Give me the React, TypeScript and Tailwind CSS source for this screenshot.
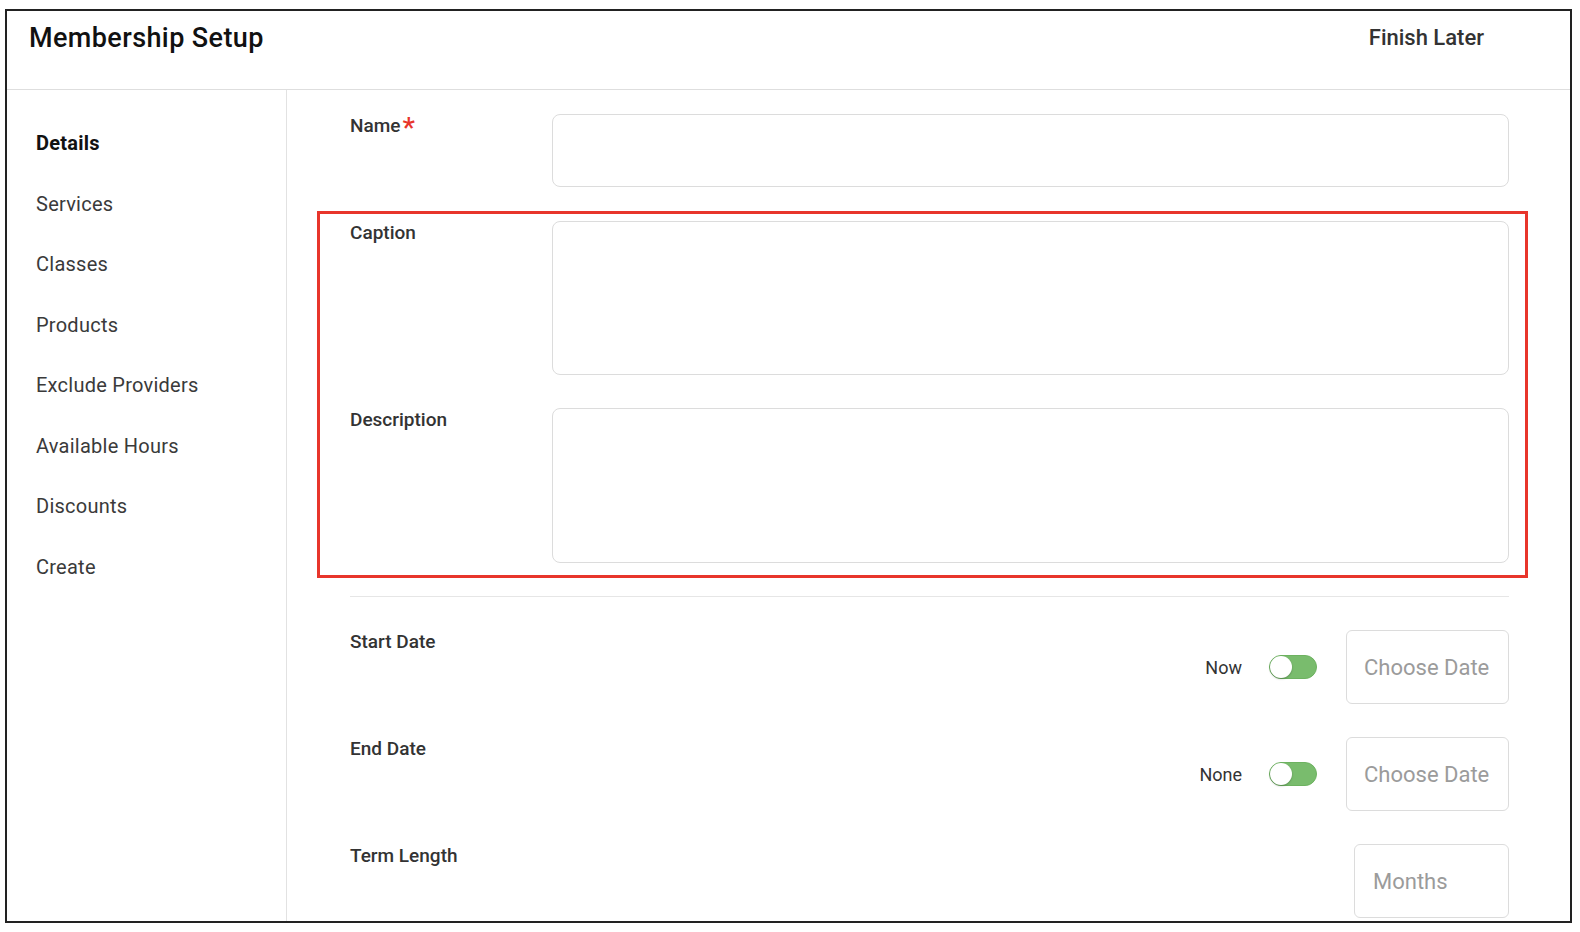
const navItems = [
  "Details",
  "Services",
  "Classes",
  "Products",
  "Exclude Providers",
  "Available Hours",
  "Discounts",
  "Create",
];

function Toggle() {
  return (
    <div className="relative w-12 h-6 rounded-full bg-[#79bc6d] border border-[#6db260]">
      <div className="absolute left-0 top-0 w-[22px] h-[22px] rounded-full bg-white shadow-[0_1px_2px_rgba(0,0,0,0.25)]" />
    </div>
  );
}

function DateRow({ label, option }: { label: string; option: string }) {
  return (
    <div className="flex mt-[33px]">
      <div className="w-[202px] text-[19px] leading-6 font-medium text-[#333]">
        {label}
      </div>
      <div className="flex-1 flex items-center justify-end">
        <span className="text-[18px] text-[#333]">{option}</span>
        <div className="ml-[27px]">
          <Toggle />
        </div>
        <div className="ml-[29px] w-[163px] h-[74px] border border-[#dcdcdc] rounded-md flex items-center pl-[17px] text-[22px] text-[#9b9b9b]">
          Choose Date
        </div>
      </div>
    </div>
  );
}

export default function App() {
  return (
    <div className="min-h-screen bg-white font-['Roboto',sans-serif] pt-[9px] pl-[5px]">
      <div className="w-[1567px] h-[914px] border-2 border-[#222] overflow-hidden flex flex-col">
        <header className="h-[79px] shrink-0 border-b border-[#dedede] flex justify-between pt-[11px] pl-[22px] pr-[86px]">
          <h1 className="text-[27px] leading-8 font-medium tracking-[0.4px] text-[#111]">
            Membership Setup
          </h1>
          <button className="text-[22px] leading-8 font-medium text-[#333] h-8">
            Finish Later
          </button>
        </header>

        <div className="flex flex-1 min-h-0">
          <nav className="w-[280px] shrink-0 border-r border-[#e2e2e2] pl-[29px] pt-[23px]">
            {navItems.map((item, i) => (
              <div
                key={item}
                className={
                  i === 0
                    ? "h-[60.5px] flex items-center text-[20px] tracking-[0.25px] font-bold text-[#111]"
                    : "h-[60.5px] flex items-center text-[20px] tracking-[0.25px] text-[#3a3a3a]"
                }
              >
                {item}
              </div>
            ))}
          </nav>

          <main className="flex-1 pl-[63px] pr-[61px] pt-[24px]">
            <div className="flex">
              <div className="w-[202px] text-[19px] leading-6 font-medium text-[#333]">
                Name
                <span className="text-[#e8352b] text-[28px] leading-none align-top ml-[2px]">*</span>
              </div>
              <div className="flex-1 h-[73px] border border-[#dcdcdc] rounded-lg" />
            </div>

            <div className="mt-[24px] -ml-[33px] -mr-[19px] border-[3px] border-[#e8352b] pl-[30px] pr-[16px] pt-[7px] pb-[12px]">
              <div className="flex">
                <div className="w-[202px] text-[19px] leading-6 font-medium text-[#333]">
                  Caption
                </div>
                <div className="flex-1 h-[154px] border border-[#dcdcdc] rounded-lg" />
              </div>
              <div className="flex mt-[33px]">
                <div className="w-[202px] text-[19px] leading-6 font-medium text-[#333]">
                  Description
                </div>
                <div className="flex-1 h-[155px] border border-[#dcdcdc] rounded-lg" />
              </div>
            </div>

            <div className="mt-[18px] h-px bg-[#e6e6e6]" />

            <DateRow label="Start Date" option="Now" />
            <DateRow label="End Date" option="None" />

            <div className="flex mt-[33px]">
              <div className="w-[202px] text-[19px] leading-6 font-medium text-[#333]">
                Term Length
              </div>
              <div className="flex-1 flex justify-end">
                <div className="w-[155px] h-[74px] border border-[#dcdcdc] rounded-md flex items-center pl-[18px] text-[22px] text-[#9b9b9b]">
                  Months
                </div>
              </div>
            </div>
          </main>
        </div>
      </div>
    </div>
  );
}
